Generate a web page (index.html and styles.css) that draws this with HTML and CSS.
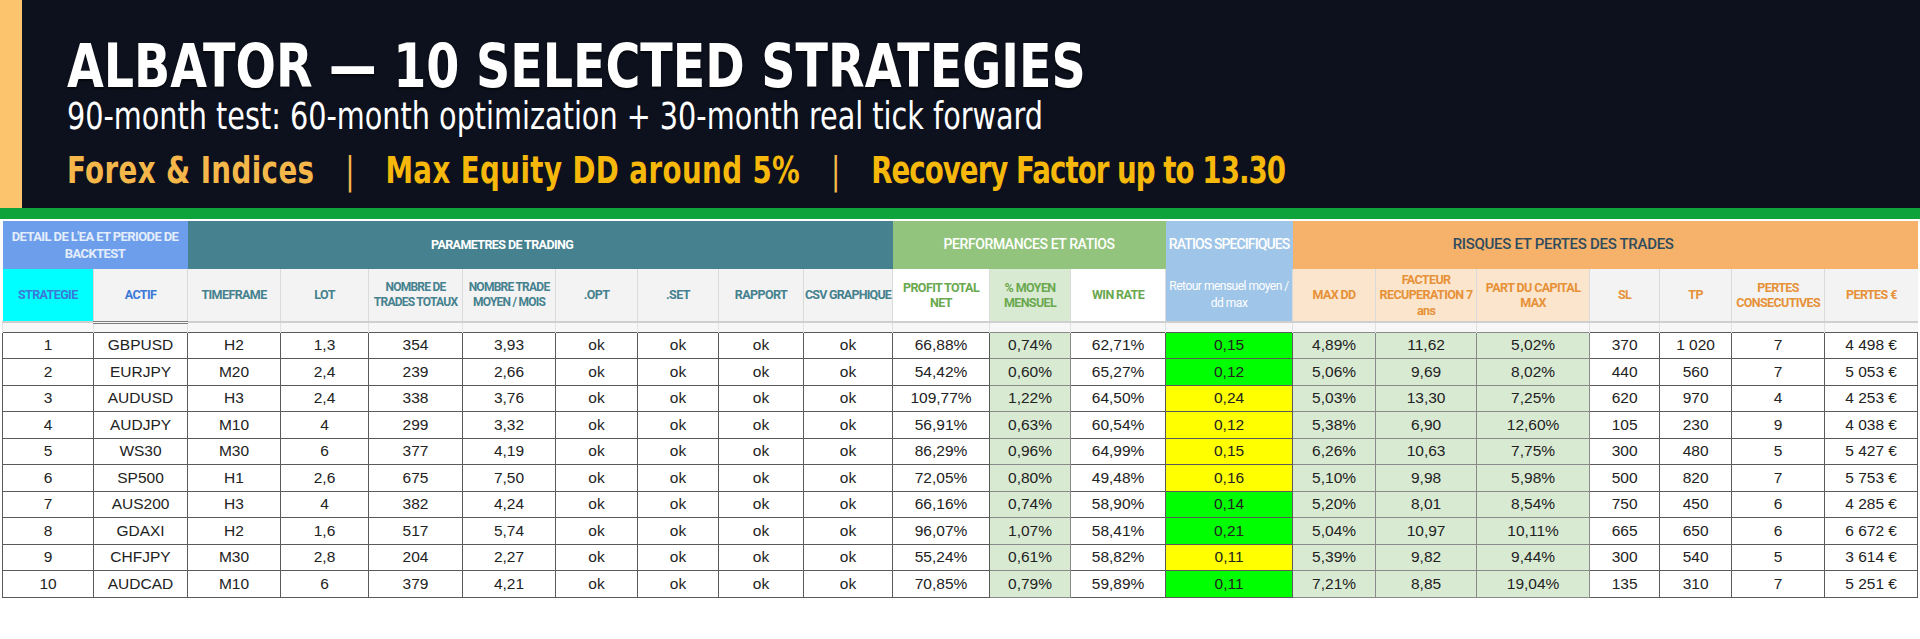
FILE: index.html
```html
<!DOCTYPE html>
<html lang="fr">
<head>
<meta charset="utf-8">
<title>ALBATOR — 10 selected strategies</title>
<link rel="stylesheet" href="styles.css">
</head>
<body>
<header class="banner">
  <h1 class="title">ALBATOR — 10 SELECTED STRATEGIES</h1>
  <p class="subtitle">90-month test: 60-month optimization + 30-month real tick forward</p>
  <p class="highlights"><span class="hl-a">Forex &amp; Indices</span><span class="sep">|</span><span class="hl-b">Max Equity DD around 5%</span><span class="sep">|</span><span class="hl-c">Recovery Factor up to 13.30</span></p>
</header>
<div class="greenbar"></div>
<main class="sheet">
<table class="grid">
  <colgroup>
    <col class="w91"><col class="w94"><col class="w93"><col class="w88"><col class="w94"><col class="w93">
    <col class="w82"><col class="w81"><col class="w85"><col class="w89">
    <col class="w97"><col class="w81"><col class="w95">
    <col class="w127">
    <col class="w83"><col class="w101"><col class="w113"><col class="w70"><col class="w72"><col class="w93"><col class="w93">
  </colgroup>
  <thead>
    <tr class="groups">
      <th colspan="2" class="g-blue">DETAIL DE L'EA ET PERIODE DE BACKTEST</th>
      <th colspan="8" class="g-teal">PARAMETRES DE TRADING</th>
      <th colspan="3" class="g-green">PERFORMANCES ET RATIOS</th>
      <th class="g-sky">RATIOS SPECIFIQUES</th>
      <th colspan="7" class="g-orange">RISQUES ET PERTES DES TRADES</th>
    </tr>
    <tr class="labels">
      <th class="l-cyan">STRATEGIE</th>
      <th class="l-blue">ACTIF</th>
      <th class="l-teal">TIMEFRAME</th>
      <th class="l-teal">LOT</th>
      <th class="l-teal tight">NOMBRE DE TRADES TOTAUX</th>
      <th class="l-teal tight">NOMBRE TRADE MOYEN / MOIS</th>
      <th class="l-teal">.OPT</th>
      <th class="l-teal">.SET</th>
      <th class="l-teal">RAPPORT</th>
      <th class="l-teal nowrap">CSV GRAPHIQUE</th>
      <th class="l-green">PROFIT TOTAL NET</th>
      <th class="l-green tint-green">% MOYEN MENSUEL</th>
      <th class="l-green">WIN RATE</th>
      <th class="l-sky">Retour mensuel moyen / dd max</th>
      <th class="l-orange tint-orange">MAX DD</th>
      <th class="l-orange tint-orange">FACTEUR RECUPERATION 7 ans</th>
      <th class="l-orange tint-orange">PART DU CAPITAL MAX</th>
      <th class="l-orange">SL</th>
      <th class="l-orange">TP</th>
      <th class="l-orange">PERTES CONSECUTIVES</th>
      <th class="l-orange">PERTES €</th>
    </tr>
    <tr class="spacer">
      <td></td><td class="dark"></td><td></td><td></td><td></td><td></td><td></td><td></td><td></td><td></td><td></td><td></td><td></td><td></td><td></td><td></td><td></td><td></td><td></td><td></td><td></td>
    </tr>
  </thead>
  <tbody id="rows"></tbody>
</table>
</main>
<script src="app.js"></script>
</body>
</html>
```

FILE: app.js
```js
const data = [
  ["1","GBPUSD","H2","1,3","354","3,93","66,88%","0,74%","62,71%","0,15","g","4,89%","11,62","5,02%","370","1 020","7","4 498 €"],
  ["2","EURJPY","M20","2,4","239","2,66","54,42%","0,60%","65,27%","0,12","g","5,06%","9,69","8,02%","440","560","7","5 053 €"],
  ["3","AUDUSD","H3","2,4","338","3,76","109,77%","1,22%","64,50%","0,24","y","5,03%","13,30","7,25%","620","970","4","4 253 €"],
  ["4","AUDJPY","M10","4","299","3,32","56,91%","0,63%","60,54%","0,12","y","5,38%","6,90","12,60%","105","230","9","4 038 €"],
  ["5","WS30","M30","6","377","4,19","86,29%","0,96%","64,99%","0,15","y","6,26%","10,63","7,75%","300","480","5","5 427 €"],
  ["6","SP500","H1","2,6","675","7,50","72,05%","0,80%","49,48%","0,16","y","5,10%","9,98","5,98%","500","820","7","5 753 €"],
  ["7","AUS200","H3","4","382","4,24","66,16%","0,74%","58,90%","0,14","g","5,20%","8,01","8,54%","750","450","6","4 285 €"],
  ["8","GDAXI","H2","1,6","517","5,74","96,07%","1,07%","58,41%","0,21","g","5,04%","10,97","10,11%","665","650","6","6 672 €"],
  ["9","CHFJPY","M30","2,8","204","2,27","55,24%","0,61%","58,82%","0,11","y","5,39%","9,82","9,44%","300","540","5","3 614 €"],
  ["10","AUDCAD","M10","6","379","4,21","70,85%","0,79%","59,89%","0,11","g","7,21%","8,85","19,04%","135","310","7","5 251 €"]
];
const body = document.getElementById("rows");
for (const r of data) {
  const tr = document.createElement("tr");
  const cells = [
    [r[0], ""], [r[1], ""], [r[2], ""], [r[3], ""], [r[4], ""], [r[5], ""],
    ["ok", ""], ["ok", ""], ["ok", ""], ["ok", ""],
    [r[6], ""], [r[7], "tint-green"], [r[8], ""],
    [r[9], r[10] === "g" ? "ratio-green" : "ratio-yellow"],
    [r[11], "tint-green"], [r[12], "tint-green"], [r[13], "tint-green"],
    [r[14], ""], [r[15], ""], [r[16], ""], [r[17], ""]
  ];
  for (const [text, cls] of cells) {
    const td = document.createElement("td");
    td.textContent = text;
    if (cls) td.className = cls;
    tr.appendChild(td);
  }
  body.appendChild(tr);
}
```

FILE: styles.css
```css
* { box-sizing: border-box; }
html, body { margin: 0; padding: 0; background: #ffffff; }
body { width: 1920px; height: 639px; overflow: hidden; }

.banner {
  height: 208px;
  background: #0c111d;
  border-left: 22px solid #fdc46e;
  padding: 36px 0 0 45px;
  font-family: "DejaVu Sans", sans-serif;
  font-stretch: condensed;
  overflow: hidden;
}
.title {
  margin: 0;
  font-size: 60px;
  line-height: 60px;
  font-weight: 700;
  color: #ffffff;
  white-space: nowrap;
  text-shadow: 0 2px 2px rgba(0, 0, 0, 0.6);
  transform: scaleX(0.881);
  transform-origin: left center;
}
.subtitle {
  margin: 1px 0 0;
  font-size: 37px;
  line-height: 40px;
  font-weight: 400;
  color: #ffffff;
  white-space: nowrap;
  transform: scaleX(0.862);
  transform-origin: left center;
}
.highlights {
  margin: 11px 0 0;
  font-size: 38px;
  line-height: 44px;
  font-weight: 700;
  white-space: nowrap;
  transform: scaleX(0.81);
  transform-origin: left center;
}
.hl-a { color: #f5b74a; letter-spacing: 0.5px; }
.hl-b { color: #f6b80a; letter-spacing: 0.5px; }
.hl-c { color: #f6b80a; letter-spacing: -1.2px; }
.sep { color: #f5b74a; font-weight: 400; margin: 0 38px; }

.greenbar { height: 11px; background: #0fa33b; }

.sheet { padding: 2px 0 0 2px; }

.grid {
  border-collapse: collapse;
  table-layout: fixed;
  width: 1915px;
  font-family: "Liberation Sans", Arial, sans-serif;
}
.w70 { width: 70px; } .w72 { width: 72px; } .w81 { width: 81px; } .w82 { width: 82px; }
.w83 { width: 83px; } .w85 { width: 85px; } .w88 { width: 88px; } .w89 { width: 89px; }
.w91 { width: 91px; } .w93 { width: 93px; } .w94 { width: 94px; } .w95 { width: 95px; }
.w97 { width: 97px; } .w101 { width: 101px; } .w113 { width: 113px; } .w127 { width: 127px; }

.grid th {
  font-family: "Roboto", "Liberation Sans", sans-serif;
  font-weight: 700;
  text-align: center;
  padding: 0 2px;
  line-height: 15.5px;
  letter-spacing: -0.6px;
}
.groups th { height: 48px; font-size: 12.5px; color: #ffffff; border: none; }
.groups .g-blue { background: #6d9eeb; color: #e4edfc; font-size: 13px; line-height: 17px; padding: 0 6px; }
.groups .g-teal { background: #45818e; padding-right: 78px; }
.groups .g-green { background: #93c47d; font-size: 14px; font-weight: 500; letter-spacing: -0.4px; }
.groups .g-sky { background: #9fc5e8; font-size: 14px; font-weight: 500; letter-spacing: -0.9px; white-space: nowrap; padding: 0; }
.groups .g-orange { background: #f6b26b; color: #2f4b5e; font-size: 15px; font-weight: 500; letter-spacing: -0.3px; padding-right: 86px; }

.labels th {
  height: 53px;
  font-size: 12.5px;
  background: #f3f3f3;
  border-left: 1px solid #dadada;
  border-bottom: 2px solid #cfcfcf;
}
.labels .tight { font-size: 12px; letter-spacing: -0.75px; padding: 0 1px; }
.labels .nowrap { white-space: nowrap; padding: 0; letter-spacing: -0.8px; }
.labels .l-cyan { background: #00ffff; color: #3c78d8; border-left: none; }
.labels .l-blue { color: #3c78d8; }
.labels .l-teal { color: #45818e; }
.labels .l-green { color: #6aa84f; background: #ffffff; }
.labels .l-green.tint-green { background: #d9ead3; }
.labels .l-sky { background: #9fc5e8; color: #ffffff; font-weight: 400; font-size: 12px; letter-spacing: -0.5px; line-height: 17px; }
.labels .l-orange { color: #e69138; }
.labels .l-orange.tint-orange { background: #fce5cd; }

.spacer td {
  height: 10px;
  padding: 0;
  background: #f7f7f7;
  border-left: 1px solid #e2e2e2;
  border-top: 1px solid #9a9a9a;
}
.spacer td.dark { border-top: 3px double #7a7a7a; }

#rows td {
  height: 26.5px;
  padding: 0;
  text-align: center;
  font-size: 15.5px;
  color: #222222;
  background: #ffffff;
  border: 1px solid #5a5a5a;
}
#rows td.tint-green { background: #d9ead3; border-color: #8a8a8a; }
#rows td.ratio-green { background: #00ff00; }
#rows td.ratio-yellow { background: #ffff00; }
```
